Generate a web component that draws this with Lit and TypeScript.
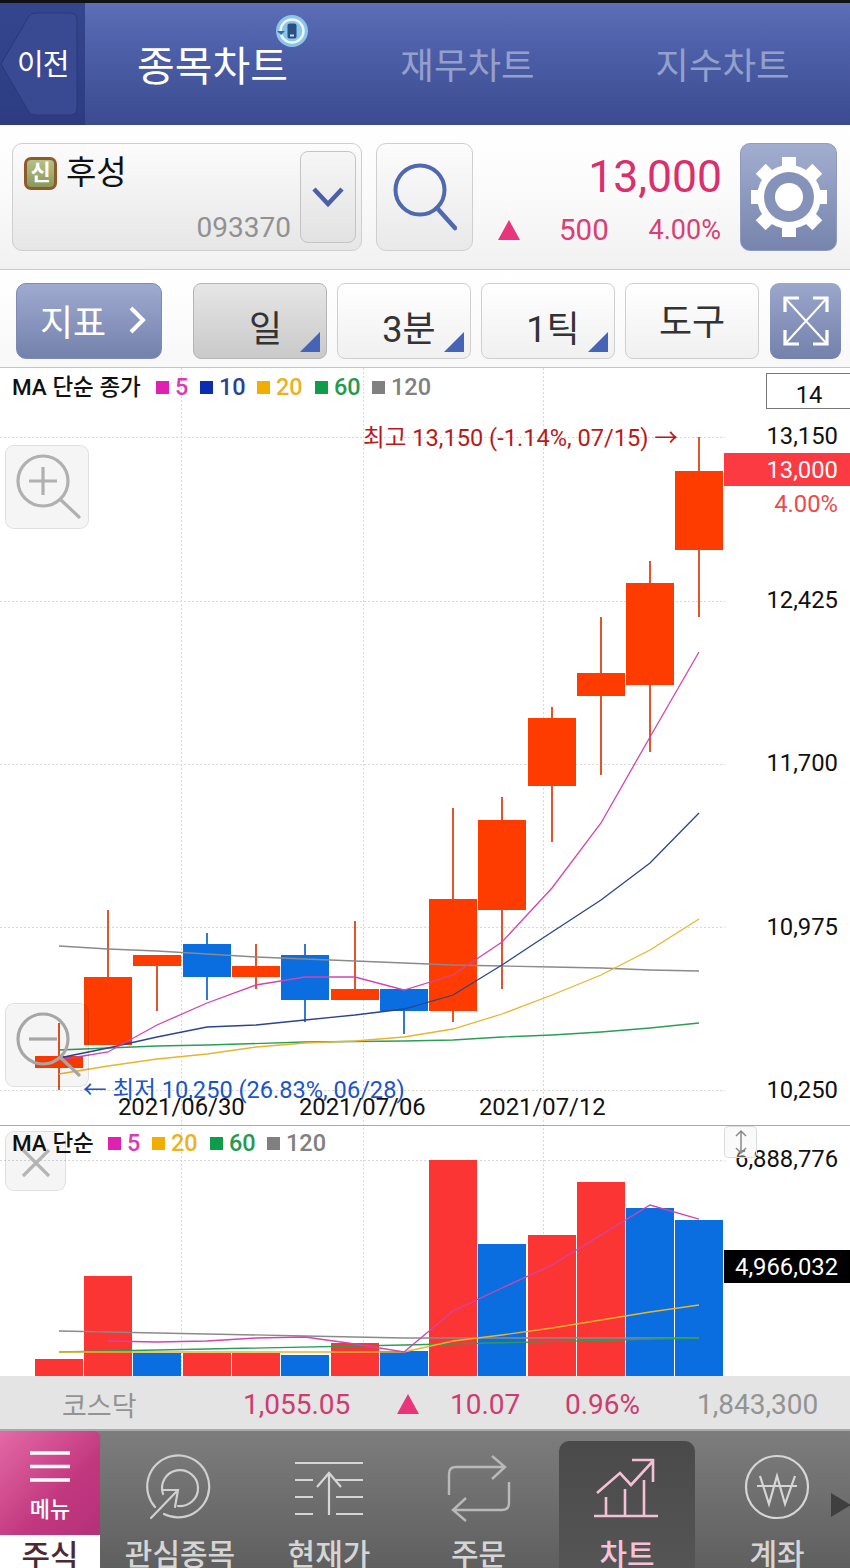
import { LitElement, html, css, svg } from "lit";
import { customElement } from "lit/decorators.js";

type C = [number, number, number, number, number, "r" | "b"];
const CANDLES: C[] = [
  [59, 1056, 1068, 1023, 1090, "r"],
  [108, 977, 1045, 910, 1045, "r"],
  [157, 955, 966, 955, 1011, "r"],
  [207, 944, 977, 933, 1000, "b"],
  [256, 966, 977, 944, 989, "r"],
  [305, 955, 1000, 944, 1022, "b"],
  [355, 989, 1000, 921, 1000, "r"],
  [404, 989, 1011, 989, 1034, "b"],
  [453, 899, 1011, 808, 1022, "r"],
  [502, 820, 910, 797, 989, "r"],
  [552, 718, 786, 707, 842, "r"],
  [601, 673, 696, 617, 775, "r"],
  [650, 583, 685, 561, 752, "r"],
  [699, 471, 550, 437, 617, "r"],
];
const VOL: [number, number, "r" | "b"][] = [
  [59, 1359, "r"], [108, 1276, "r"], [157, 1353, "b"], [207, 1353, "r"], [256, 1353, "r"],
  [305, 1355, "b"], [355, 1343, "r"], [404, 1351, "b"], [453, 1160, "r"], [502, 1244, "b"],
  [552, 1235, "r"], [601, 1182, "r"], [650, 1208, "b"], [699, 1220, "b"],
];
const LINES: [string, string][] = [
  ["#8a8a8a", "59,946 108,949 157,951 207,954 256,957 305,959 355,961 404,963 453,965 502,966 552,967 601,968 650,970 699,971"],
  ["#2a9e55", "59,1050 157,1046 207,1045 305,1042 404,1041 453,1040 502,1037 552,1035 601,1032 650,1028 699,1023"],
  ["#e8b52a", "59,1074 108,1066 157,1059 207,1054 256,1047 305,1043 355,1041 404,1037 453,1029 502,1014 552,995 601,975 650,950 699,919"],
  ["#2c4390", "59,1058 108,1048 157,1037 207,1027 256,1025 305,1020 355,1015 404,1009 453,995 502,965 552,932 601,900 650,863 699,813"],
  ["#d244ae", "59,1060 108,1052 157,1025 207,1003 256,985 305,977 355,977 404,990 453,975 502,942 552,888 601,823 650,737 699,652"],
  ["#8a8a8a", "59,1331 157,1333 305,1336 404,1338 699,1338"],
  ["#2a9e55", "59,1352 404,1345 699,1338"],
  ["#e8b52a", "59,1352 404,1352 453,1341 502,1335 552,1328 601,1320 650,1312 699,1305"],
  ["#d244ae", "108,1341 157,1342 207,1341 256,1338 305,1337 355,1344 404,1352 453,1311 502,1288 552,1265 601,1235 650,1205 699,1219"],
];

const legend = (x: number, y: number, items: [string, string, string, number][]) =>
  items.map(([sq, tx, label, ox]) => svg`
    <rect x=${x + ox} y=${y - 14} width="13" height="13" fill=${sq}></rect>
    <text x=${x + ox + 19} y=${y} class="leg" fill=${tx}>${label}</text>`);

const TRI = html`<svg width="22" height="20" viewBox="0 0 22 20"><path d="M11 0 L22 20 L0 20 Z" fill="#e9357a"></path></svg>`;

@customElement("app-root")
export class AppRoot extends LitElement {
  static styles = css`
    :host { display: block; width: 850px; height: 1568px; overflow: hidden; background: #fff;
      font-family: Roboto, "Noto Sans CJK KR", sans-serif; }
    svg { display: block; }
    .header { height: 122px; border-top: 3px solid #111; display: flex;
      background: linear-gradient(#5b6eb6, #4d60a9 35%, #3c4b90); }
    .back { width: 85px; flex: none; position: relative; background: linear-gradient(#34468f, #2d3c82);
      color: #fff; font-size: 29px; }
    .back svg { position: absolute; left: 0; top: 0; }
    .back span { position: absolute; left: 17px; top: 41px; line-height: 42px; letter-spacing: -1px; }
    .tab { width: 255px; flex: none; position: relative; display: flex; align-items: center; justify-content: center;
      padding-bottom: 2px; box-sizing: border-box; font-size: 36.5px; color: #94a0cb; }
    .tab.on { color: #fff; font-size: 41px; }
    .badge { position: absolute; left: 190px; top: 11px; }
    .top { height: 145px; box-sizing: border-box; padding: 18px 12px 0; display: flex;
      background: linear-gradient(#fff, #fafafa 50%, #f1f1f1); border-bottom: 1px solid #ccc; }
    .stock { width: 350px; height: 108px; box-sizing: border-box; border: 1px solid #cfcfcf; border-radius: 10px;
      background: linear-gradient(#fcfcfc, #e6e6e6); display: flex; padding: 7px 5px 7px 11px; }
    .stock-l { flex: 1; display: flex; flex-direction: column; justify-content: space-between; }
    .name { display: flex; align-items: center; gap: 9px; font-size: 33px; color: #111; height: 38px; margin-top: 3px; line-height: 38px; }
    .sin { width: 33px; height: 33px; box-sizing: border-box; border: 3px solid #8f5a28; border-radius: 7px;
      background: linear-gradient(#b6c089, #88985c); color: #fff; font-size: 22px; font-weight: 700;
      display: flex; align-items: center; justify-content: center; line-height: 1; }
    .nm { margin-top: -1px; }
    .code { align-self: flex-end; margin-right: 9px; font-size: 28px; color: #919191; line-height: 32px; margin-bottom: -1px; }
    .drop { width: 56px; height: 92px; box-sizing: border-box; border: 1px solid #c4c4c4; border-radius: 8px;
      background: linear-gradient(#f6f6f6, #e2e2e2); display: flex; align-items: center; justify-content: center; }
    .search { width: 97px; height: 108px; margin-left: 14px; box-sizing: border-box; border: 1px solid #cfcfcf;
      border-radius: 10px; background: linear-gradient(#fcfcfc, #e9e9e9); display: flex; align-items: center; justify-content: center; }
    .price { width: 248px; margin-right: 19px; height: 108px; color: #d92f6c; display: flex; flex-direction: column; align-items: flex-end; }
    .big { font-size: 44.5px; line-height: 52px; margin-top: 8px; margin-right: -1px; }
    .sub { display: flex; align-items: center; width: 100%; box-sizing: border-box; padding-left: 25px;
      font-size: 27px; line-height: 32px; margin-top: 11px; color: #db3d74; justify-content: space-between; }
    .sub .v { margin-left: 39px; flex: 1; font-size: 29.5px; }
    .gear { width: 97px; height: 108px; border-radius: 10px; background: linear-gradient(#a2aed0, #7684ad);
      border: 1px solid #8e9abf; box-sizing: border-box; display: flex; align-items: center; justify-content: center; }
    .tools { height: 98px; box-sizing: border-box; padding: 13px 9px 0 16px; display: flex; background: linear-gradient(#fff, #f8f8f8);
      border-bottom: 1px solid #c4c4c4; }
    .ind { width: 146px; height: 76px; box-sizing: border-box; border-radius: 10px; border: 1px solid #7d8ab4;
      background: linear-gradient(#9eaacf, #7481ac); color: #fff; font-size: 36px; display: flex; align-items: center;
      justify-content: center; gap: 22px; margin-right: 31px; padding-left: 8px; padding-bottom: 2px; }
    .tb { width: 134px; height: 76px; box-sizing: border-box; margin-right: 10px; border: 1px solid #cfcfcf; border-radius: 8px;
      background: linear-gradient(#fff, #f0f0f0); position: relative; color: #333; font-size: 36px;
      display: flex; align-items: center; justify-content: center; }
    .tb.arrowed { padding-left: 10px; padding-top: 9px; }
    .tb.sel { background: linear-gradient(#e6e6e6, #c9c9c9); border-color: #b5b5b5; padding-left: 11px; }
    .tb.plain { padding-bottom: 4px; margin-right: 11px; }
    .tb svg { position: absolute; right: 6px; bottom: 6px; }
    .exp { width: 71px; height: 76px; box-sizing: border-box; border-radius: 9px; background: linear-gradient(#9aa6ca, #7481ac);
      display: flex; align-items: center; justify-content: center; }
    .chart { height: 1008px; position: relative; overflow: hidden; }
    text { font-family: Roboto, "Noto Sans CJK KR", sans-serif; font-weight: 500; }
    .leg { font-size: 23.5px; font-weight: 500; }
    .lbl { font-size: 22.5px; fill: #111; }
    .axis { font-size: 23.8px; fill: #111; font-weight: 400; }
    .note { font-size: 23.6px; font-weight: 400; }
    .tool { position: absolute; left: 5px; box-sizing: border-box; border: 1px solid rgba(0,0,0,.09); border-radius: 9px;
      background: rgba(0,0,0,.04); display: flex; align-items: center; justify-content: center; }
    .t1 { top: 77px; width: 84px; height: 84px; }
    .t2 { top: 635px; width: 84px; height: 84px; }
    .t3 { top: 763px; width: 61px; height: 60px; padding-top: 3px; }
    .updown { position: absolute; left: 724px; top: 758px; width: 33px; height: 32px; box-sizing: border-box; border: 1px solid #ddd;
      border-radius: 4px; background: rgba(240,240,240,.35); display: flex; align-items: center; justify-content: center; }
    .index { height: 55px; box-sizing: border-box; background: #e4e4e4; border-bottom: 2px solid #a9a9a9; padding: 3px 0 0 62px;
      display: flex; align-items: center; font-size: 28px; color: #cf3a70; }
    .index span { flex: none; }
    .index .g { color: #939393; }
    .index .k { font-size: 27px; width: 181px; }
    .nav { height: 137px; display: flex; position: relative; background: linear-gradient(#7d7d7d, #5f5f5f); color: #d5d5d5; overflow: hidden; }
    .menu { width: 100px; flex: none; display: flex; flex-direction: column; }
    .mtop { height: 104px; background: linear-gradient(135deg, #e46aa6, #c2387f 60%, #b53079); color: #fff; border-top-right-radius: 6px;
      display: flex; flex-direction: column; align-items: center; font-size: 22px; line-height: 26px; font-weight: 500; }
    .mtop svg { margin-top: 20px; margin-bottom: 15px; }
    .mbot { height: 33px; overflow: hidden; background: #fff; color: #4a2a35; font-size: 31px; font-weight: 500; text-align: center; line-height: 44px; }
    .item { flex: none; display: flex; flex-direction: column; align-items: center; font-size: 30px; font-weight: 500; }
    .item svg { margin-top: 21px; flex: none; }
    .item span { line-height: 40px; margin-top: 13px; white-space: nowrap; }
    .item.on { background: linear-gradient(#4a4a4a, #555); border-radius: 10px 10px 0 0; margin-top: 10px; color: #f5c2d8; }
    .item.on svg { margin-top: 11px; }
    .more { position: absolute; left: 831px; top: 62px; width: 0; height: 0; border-left: 20px solid #3f3f3f; border-top: 12px solid transparent; border-bottom: 12px solid transparent; }
  `;

  private grid() {
    const v = [181, 363, 543];
    const h = [437, 601, 764, 927, 1090, 1160];
    return svg`
      ${v.map((x) => svg`<line x1=${x + 0.5} x2=${x + 0.5} y1="368" y2="1376" stroke="#d8d8d8" stroke-dasharray="2 2"></line>`)}
      ${h.map((y) => svg`<line x1="0" x2="725" y1=${y + 0.5} y2=${y + 0.5} stroke="#d8d8d8" stroke-dasharray="2 2"></line>`)}`;
  }

  private chart() {
    return html`<svg width="850" height="1008" viewBox="0 368 850 1008">
      ${this.grid()}
      <line x1="0" x2="850" y1="1125.5" y2="1125.5" stroke="#a8a8a8"></line>
      ${VOL.map(([x, t, c]) => svg`<rect x=${x - 24} y=${t} width="48" height=${1376 - t} fill=${c === "r" ? "#fb3434" : "#0b6ee0"}></rect>`)}
      ${CANDLES.map(([x, t, b, wt, wb, c]) => {
        const col = c === "r" ? "#ff3c00" : "#0b6ee0";
        const wick = c === "r" ? "#e2542a" : "#2f7ad6";
        return svg`<line x1=${x} x2=${x} y1=${wt} y2=${wb} stroke=${wick} stroke-width="2"></line>
          <rect x=${x - 24} y=${t} width="48" height=${b - t} fill=${col}></rect>`;
      })}
      ${LINES.map(([c, p]) => svg`<polyline points=${p} fill="none" stroke=${c} stroke-width="1.3"></polyline>`)}

      <text x="12" y="395" class="lbl">MA 단순 종가</text>
      ${legend(156, 395, [["#e020b0", "#d93bb4", "5", 0], ["#0d2db0", "#2a3f96", "10", 44], ["#f2ae00", "#e9b325", "20", 101], ["#0f9d4a", "#26994f", "60", 159], ["#808080", "#808080", "120", 216]])}
      <text x="12" y="1151" class="lbl">MA 단순</text>
      ${legend(108, 1151, [["#e020b0", "#d93bb4", "5", 0], ["#f2ae00", "#e9b325", "20", 44], ["#0f9d4a", "#26994f", "60", 102], ["#808080", "#808080", "120", 159]])}

      <text x="363" y="446" fill="#b81a1a" class="note">최고 13,150 (-1.14%, 07/15) →</text>
      <text x="83" y="1098" fill="#1c55c8" class="note">← 최저 10,250 (26.83%, 06/28)</text>
      <text x="118" y="1115" class="axis">2021/06/30</text>
      <text x="299" y="1115" class="axis">2021/07/06</text>
      <text x="479" y="1115" class="axis">2021/07/12</text>

      <rect x="766.5" y="373.5" width="84" height="35" fill="#fff" stroke="#777"></rect>
      <text x="809" y="403" text-anchor="middle" class="axis">14</text>
      <text x="838" y="444" text-anchor="end" class="axis">13,150</text>
      <rect x="724" y="453" width="126" height="33" fill="#fb3a42"></rect>
      <text x="838" y="478" text-anchor="end" fill="#fff" class="axis" style="fill:#fff">13,000</text>
      <text x="838" y="512" text-anchor="end" class="axis" style="fill:#ea4b4b">4.00%</text>
      <text x="838" y="608" text-anchor="end" class="axis">12,425</text>
      <text x="838" y="771" text-anchor="end" class="axis">11,700</text>
      <text x="838" y="935" text-anchor="end" class="axis">10,975</text>
      <text x="838" y="1098" text-anchor="end" class="axis">10,250</text>
      <text x="838" y="1167" text-anchor="end" class="axis">6,888,776</text>
      <rect x="724" y="1250" width="126" height="33" fill="#000"></rect>
      <text x="838" y="1275" text-anchor="end" class="axis" style="fill:#fff">4,966,032</text>
    </svg>`;
  }

  render() {
    return html`
      <div class="header">
        <div class="back">
          <svg width="85" height="122" viewBox="0 3 85 122">
            <path d="M1 64 L29 16 Q31 13 36 13 L70 13 Q77 13 77 20 L77 108 Q77 115 70 115 L36 115 Q31 115 29 112 Z" fill="#3a4a92" stroke="#2a3877"></path>
          </svg>
          <span>이전</span>
        </div>
        <div class="tab on">종목차트
          <svg class="badge" width="34" height="34" viewBox="0 0 34 34">
            <circle cx="17" cy="17" r="16" fill="#8cc4ea"></circle>
            <circle cx="17" cy="17" r="11.5" fill="none" stroke="#eaf5fc" stroke-width="2.5"></circle>
            <path d="M2 17 L6 21 L10 17" fill="#2c6fa5"></path>
            <rect x="12.5" y="9.5" width="9" height="15" rx="2" fill="#2a4f84"></rect>
            <rect x="15" y="20.5" width="4" height="2" fill="#c9dff0"></rect>
          </svg>
        </div>
        <div class="tab">재무차트</div>
        <div class="tab">지수차트</div>
      </div>

      <div class="top">
        <div class="stock">
          <div class="stock-l">
            <div class="name"><span class="sin">신</span><span class="nm">후성</span></div>
            <div class="code">093370</div>
          </div>
          <div class="drop">
            <svg width="34" height="24" viewBox="0 0 34 24"><path d="M3 4 L17 19 L31 4" fill="none" stroke="#4a5fa5" stroke-width="4.5"></path></svg>
          </div>
        </div>
        <div class="search">
          <svg width="64" height="68" viewBox="0 0 64 68"><circle cx="27" cy="27" r="24.5" fill="none" stroke="#5068ae" stroke-width="4"></circle><path d="M44 45 L62 65" stroke="#5068ae" stroke-width="4.5" stroke-linecap="round"></path></svg>
        </div>
        <div class="price">
          <div class="big">13,000</div>
          <div class="sub">
            ${TRI}
            <span class="v">500</span><span>4.00%</span>
          </div>
        </div>
        <div class="gear">
          <svg width="76" height="82" viewBox="-38 -41 76 82">
            <g fill="#fff">
              ${[0, 45, 90, 135].map((a) => svg`<rect x="-7" y="-40" width="14" height="80" transform="rotate(${a})"></rect>`)}
              <circle r="32"></circle>
            </g>
            <circle r="25" fill="#8592b9"></circle>
            <circle r="14" fill="#fff"></circle>
          </svg>
        </div>
      </div>

      <div class="tools">
        <div class="ind"><span>지표</span>
          <svg width="18" height="30" viewBox="0 0 18 30"><path d="M3 3 L15 15 L3 27" fill="none" stroke="#fff" stroke-width="4"></path></svg>
        </div>
        <div class="tb arrowed sel">일<svg width="20" height="20"><path d="M20 0 V20 H0 Z" fill="#4763b5"></path></svg></div>
        <div class="tb arrowed">3분<svg width="20" height="20"><path d="M20 0 V20 H0 Z" fill="#4763b5"></path></svg></div>
        <div class="tb arrowed">1틱<svg width="20" height="20"><path d="M20 0 V20 H0 Z" fill="#4763b5"></path></svg></div>
        <div class="tb plain">도구</div>
        <div class="exp">
          <svg width="46" height="50" viewBox="0 0 46 50"><g fill="none" stroke="#fff">
            <path d="M2 2 L44 48 M44 2 L2 48" stroke-width="2"></path>
            <path d="M2 16 V2 H16 M30 2 H44 V16 M2 34 V48 H16 M30 48 H44 V34" stroke-width="3.2"></path>
          </g></svg>
        </div>
      </div>

      <div class="chart">
        ${this.chart()}
        <div class="tool t1"><svg width="68" height="68" viewBox="0 0 68 68"><g fill="none" stroke="#b0b0b0" stroke-width="3.2"><circle cx="30" cy="28" r="25"></circle><path d="M16 28 H44 M30 14 V42"></path><path d="M48 47 L66 64" stroke-linecap="round"></path></g></svg></div>
        <div class="tool t2"><svg width="68" height="68" viewBox="0 0 68 68"><g fill="none" stroke="#a6a6a6" stroke-width="3.2"><circle cx="30" cy="28" r="25"></circle><path d="M16 28 H44"></path><path d="M48 47 L66 64" stroke-linecap="round"></path></g></svg></div>
        <div class="tool t3"><svg width="30" height="30" viewBox="0 0 30 30"><path d="M2 2 L28 28 M28 2 L2 28" stroke="#b4b4b4" stroke-width="3.2"></path></svg></div>
        <div class="updown"><svg width="14" height="26" viewBox="0 0 14 26"><path d="M7 2 V24 M2 7 L7 2 L12 7 M2 19 L7 24 L12 19" fill="none" stroke="#8a8a8a" stroke-width="1.5"></path></svg></div>
      </div>

      <div class="index">
        <span class="g k">코스닥</span>
        <span style="width:154px">1,055.05</span>
        <span style="width:53px">${TRI}</span>
        <span style="width:115px">10.07</span>
        <span style="width:132px">0.96%</span>
        <span class="g">1,843,300</span>
      </div>

      <div class="nav">
        <div class="menu">
          <div class="mtop">
            <svg width="40" height="31" viewBox="0 0 40 31"><path d="M0 2 H40 M0 15.5 H40 M0 29 H40" stroke="#fff" stroke-width="3.5"></path></svg>
            <span>메뉴</span>
          </div>
          <div class="mbot">주식</div>
        </div>
        <div class="item" style="width:160px">
          <svg width="70" height="70" viewBox="145 1452 70 70"><g fill="none" stroke="#d0d0d0" stroke-width="2.2" stroke-linecap="round">
            <path d="M155 1507 A31 31 0 1 1 164 1514"></path>
            <path d="M163 1494 A18 18 0 1 1 178 1506"></path>
            <path d="M151 1518 L178 1490 M163 1490 H178 L175 1507"></path>
          </g></svg>
          <span>관심종목</span>
        </div>
        <div class="item" style="width:138px">
          <svg width="70" height="70" viewBox="294 1452 70 70"><g fill="none" stroke="#d6d6d6" stroke-width="2.2">
            <path d="M295 1463 H363 M295 1480 H313 M336 1480 H363 M295 1497 H313 M336 1497 H363 M295 1514 H313 M336 1514 H363"></path>
            <path d="M329 1515 V1473 M317 1487 L329 1473 L341 1487"></path>
          </g></svg>
          <span>현재가</span>
        </div>
        <div class="item" style="width:161px">
          <svg width="70" height="70" viewBox="444 1452 70 70"><g fill="none" stroke="#b9b9b9" stroke-width="2.4">
            <path d="M449 1495 V1474 Q449 1467 456 1467 H505 M492 1456 L505 1467 L492 1479"></path>
            <path d="M509 1482 V1503 Q509 1510 502 1510 H453 M466 1498 L453 1510 L466 1521"></path>
          </g></svg>
          <span>주문</span>
        </div>
        <div class="item on" style="width:136px">
          <svg width="70" height="70" viewBox="594 1452 70 70"><g fill="none" stroke="#f5bfd5" stroke-width="2.6">
            <path d="M599 1493 L622 1473 L633 1485 L655 1461 M634 1460 H655 V1482"></path>
            <path d="M596 1516 H660 M608 1516 V1497 M627 1516 V1489 M646 1516 V1480"></path>
          </g></svg>
          <span>차트</span>
        </div>
        <div class="item" style="width:164px">
          <svg width="70" height="70" viewBox="742 1452 70 70"><g fill="none" stroke="#d6d6d6" stroke-width="2.2">
            <circle cx="777" cy="1487" r="31"></circle>
            <path d="M760 1476 L769 1504 L777 1476 L785 1504 L795 1476 M757 1486 H797"></path>
          </g></svg>
          <span>계좌</span>
        </div>
        <div class="more"></div>
      </div>
    `;
  }
}
